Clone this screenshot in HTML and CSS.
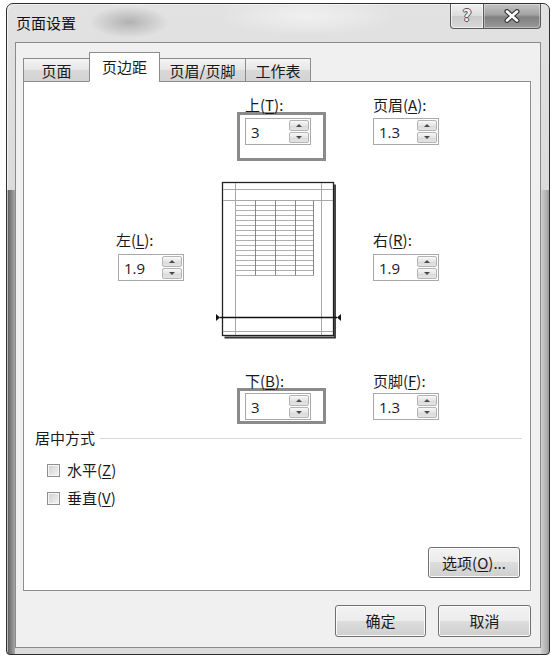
FILE: index.html
```html
<!DOCTYPE html>
<html lang="zh-CN">
<head>
<meta charset="utf-8">
<title>页面设置</title>
<link rel="stylesheet" href="styles.css">
</head>
<body>
<div class="window">
  <div class="titlebar">
    <span class="title">页面设置</span>
    <div class="caption">
      <span class="cbtn help">?</span>
      <span class="cbtn close">
        <svg width="18" height="14" viewBox="0 0 18 14"><path d="M4 2.5 L14 11.5 M14 2.5 L4 11.5" stroke="#3a3a3a" stroke-width="5" stroke-linecap="round"/><path d="M4 2.5 L14 11.5 M14 2.5 L4 11.5" stroke="#ffffff" stroke-width="2.6" stroke-linecap="round"/></svg>
      </span>
    </div>
  </div>
  <div class="client">
    <div class="tabs">
      <div class="tab t1">页面</div>
      <div class="tab t2 active">页边距</div>
      <div class="tab t3">页眉/页脚</div>
      <div class="tab t4">工作表</div>
    </div>
    <div class="panel">
      <div class="margins">
        <div class="f-top">
          <div class="lbl lbl-c">上(<u>T</u>):</div>
          <div class="hl hl-top">
            <div class="spin"><span class="val">3</span><span class="arrows"><i class="ab"><b class="up"></b></i><i class="ab"><b class="dn"></b></i></span></div>
          </div>
        </div>
        <div class="f-header">
          <div class="lbl">页眉(<u>A</u>):</div>
          <div class="spin sp-r1"><span class="val">1.3</span><span class="arrows"><i class="ab"><b class="up"></b></i><i class="ab"><b class="dn"></b></i></span></div>
        </div>
        <div class="f-left">
          <div class="lbl">左(<u>L</u>):</div>
          <div class="spin sp-r2 sp-left"><span class="val">1.9</span><span class="arrows"><i class="ab"><b class="up"></b></i><i class="ab"><b class="dn"></b></i></span></div>
        </div>
        <div class="preview">
          <svg width="126" height="160" viewBox="0 0 126 160">
            <rect x="6.5" y="1.5" width="111" height="153" fill="#fff" stroke="#222" stroke-width="1.3"/>
            <path d="M119 3.5 V156.5 H8.5" fill="none" stroke="#333" stroke-width="1.8"/>
            <g stroke="#a8a8a8" stroke-width="1">
              <path d="M19.5 2 V154 M105.5 2 V154 M7 8.5 H117 M7 19.5 H117 M7 150.5 H117"/>
            </g>
            <g stroke="#9a9a9a" stroke-width="0.8">
              <path d="M19.5 24.5 H97.5 M19.5 29.5 H97.5 M19.5 34.5 H97.5 M19.5 39.5 H97.5 M19.5 44.5 H97.5 M19.5 49.5 H97.5 M19.5 54.5 H97.5 M19.5 59.5 H97.5 M19.5 64.5 H97.5 M19.5 69.5 H97.5 M19.5 74.5 H97.5 M19.5 79.5 H97.5 M19.5 84.5 H97.5 M19.5 89.5 H97.5 M19.5 94.5 H97.5"/>
            </g>
            <g stroke="#7a7a7a" stroke-width="0.9">
              <path d="M39.5 19.5 V94.5 M59.5 19.5 V94.5 M79.5 19.5 V94.5 M97.5 19.5 V94.5"/>
            </g>
            <path d="M4 136.5 H121" stroke="#111" stroke-width="1.6"/>
            <polygon points="0,133 4,136.5 0,140" fill="#111"/>
            <polygon points="125,133 121,136.5 125,140" fill="#111"/>
          </svg>
        </div>
        <div class="f-right">
          <div class="lbl">右(<u>R</u>):</div>
          <div class="spin sp-r2"><span class="val">1.9</span><span class="arrows"><i class="ab"><b class="up"></b></i><i class="ab"><b class="dn"></b></i></span></div>
        </div>
        <div class="f-bottom">
          <div class="lbl lbl-c lbl-14">下(<u>B</u>):</div>
          <div class="hl hl-bottom">
            <div class="spin"><span class="val">3</span><span class="arrows"><i class="ab"><b class="up"></b></i><i class="ab"><b class="dn"></b></i></span></div>
          </div>
        </div>
        <div class="f-footer">
          <div class="lbl lbl-14">页脚(<u>F</u>):</div>
          <div class="spin sp-r3"><span class="val">1.3</span><span class="arrows"><i class="ab"><b class="up"></b></i><i class="ab"><b class="dn"></b></i></span></div>
        </div>
      </div>
      <div class="group-head"><span>居中方式</span><span class="rule"></span></div>
      <div class="chk chk1"><span class="box"></span><span>水平(<u>Z</u>)</span></div>
      <div class="chk chk2"><span class="box"></span><span>垂直(<u>V</u>)</span></div>
      <div class="btn opt">选项(<u>O</u>)...</div>
    </div>
    <div class="footer">
      <div class="btn ok">确定</div>
      <div class="btn cancel">取消</div>
    </div>
  </div>
</div>
</body>
</html>
```

FILE: styles.css
```css
html, body {
  margin: 0;
  padding: 0;
  background: #ffffff;
}
body {
  font-family: "Noto Sans CJK SC", "Noto Sans", sans-serif;
  font-size: 15px;
  color: #1a1a1a;
}
u { text-decoration: underline; text-underline-offset: 2px; }

.window {
  box-sizing: border-box;
  width: 544px;
  height: 652px;
  margin: 3px 0 0 6px;
  border: 1px solid #2e2e2e;
  border-radius: 7px 7px 4px 4px;
  padding: 0 8px 6px 8px;
  display: flex;
  flex-direction: column;
  background:
    linear-gradient(90deg, #555 0%, #7a7a7a 40%, #a6a6a6 100%) left 0 top 186px / 8px 100% no-repeat,
    linear-gradient(90deg, #cfcfcf 0%, #b4b4b4 60%, #9c9c9c 100%) right 0 top 186px / 8px 100% no-repeat,
    radial-gradient(ellipse 40px 16px at 122px 18px, rgba(120,120,120,0.45), rgba(120,120,120,0) 100%),
    radial-gradient(ellipse 90px 20px at 300px 12px, rgba(255,255,255,0.5), rgba(255,255,255,0) 100%),
    linear-gradient(#e2e2e2, #d3d3d3 60%, #dcdcdc);
  box-shadow: inset 1px 1px 0 rgba(255,255,255,0.6);
}

.titlebar {
  height: 38px;
  display: flex;
  align-items: center;
  justify-content: space-between;
  flex: none;
}
.title {
  padding-left: 1px;
  font-size: 15px;
  line-height: 18px;
  color: #111;
}
.caption {
  align-self: flex-start;
  display: flex;
  height: 25px;
}
.cbtn {
  box-sizing: border-box;
  height: 25px;
  border: 1px solid #5a5a5a;
  border-top: none;
  display: flex;
  align-items: center;
  justify-content: center;
}
.help {
  width: 34px;
  border-radius: 0 0 0 4px;
  background: linear-gradient(#f2f2f2, #dcdcdc 50%, #cbcbcb 51%, #d8d8d8);
  font-family: "DejaVu Sans", sans-serif;
  font-size: 15px;
  font-weight: bold;
  color: #f0f0f0;
  text-shadow: 1px 0 0 #555, -1px 0 0 #555, 0 1px 0 #555, 0 -1px 0 #555;
  box-shadow: inset 0 0 0 1px rgba(255,255,255,0.6);
}
.close {
  width: 57px;
  border-left: none;
  border-radius: 0 0 4px 0;
  background: linear-gradient(#c4c4c4, #a2a2a2 45%, #808080 55%, #9a9a9a);
  box-shadow: inset 0 0 0 1px rgba(255,255,255,0.35);
}
.close svg { display: block; }

.client {
  flex: 1;
  box-sizing: border-box;
  border: 1px solid #8a8a8a;
  background: #f0f0f0;
  padding: 9px 9px 10px 7px;
  display: flex;
  flex-direction: column;
}

.tabs {
  display: flex;
  align-items: flex-end;
  height: 30px;
  margin-bottom: -1px;
  position: relative;
  z-index: 1;
}
.tab {
  box-sizing: border-box;
  height: 24px;
  border: 1px solid #8c8c8c;
  background: linear-gradient(#f4f4f4, #e6e6e6 50%, #d9d9d9 51%, #d3d3d3);
  display: flex;
  align-items: center;
  justify-content: center;
  font-size: 15px;
  line-height: 18px;
  padding-top: 1px;
  color: #1a1a1a;
}
.t1 { width: 67px; }
.t2 { width: 71px; margin-left: -1px; }
.t3 { width: 87px; margin-left: -1px; }
.t4 { width: 66px; margin-left: -1px; }
.tab.active {
  height: 30px;
  background: #ffffff;
  border-bottom-color: #ffffff;
  padding-top: 0;
  padding-bottom: 5px;
  align-items: flex-end;
}

.panel {
  box-sizing: border-box;
  width: 508px;
  height: 510px;
  border: 1px solid #8e8e8e;
  background: #ffffff;
  padding-top: 15px;
  display: flex;
  flex-direction: column;
  flex: none;
}

.margins {
  display: grid;
  grid-template-columns: 100px 157px 1fr;
  grid-template-rows: 84px 193px 50px;
  padding-left: 92px;
}
.lbl {
  font-size: 15px;
  line-height: 15px;
  white-space: nowrap;
}
.lbl-14 { line-height: 14px; }
.lbl-c { padding-left: 8px; }

.f-top { grid-column: 2; grid-row: 1; margin-left: 21px; }
.f-header { grid-column: 3; grid-row: 1; }
.f-left { grid-column: 1; grid-row: 2; margin-top: 51px; }
.preview { grid-column: 2; grid-row: 2; }
.preview svg { display: block; }
.f-right { grid-column: 3; grid-row: 2; margin-top: 51px; }
.f-bottom { grid-column: 2; grid-row: 3; margin-left: 21px; }
.f-footer { grid-column: 3; grid-row: 3; }

.hl {
  box-sizing: border-box;
  width: 89px;
  border: 3px solid #8b8b8b;
  padding-left: 5px;
}
.hl-top { height: 49px; padding-top: 3px; }
.hl-bottom { height: 36px; padding-top: 2px; }

.sp-r1 { margin-top: 6px; }
.sp-r2 { margin-top: 7px; }
.sp-r3 { margin-top: 5px; }
.sp-left { margin-left: 2px; }

.spin {
  box-sizing: border-box;
  width: 66px;
  height: 27px;
  border: 1px solid #a9a9a9;
  background: #ffffff;
  display: flex;
  align-items: center;
  justify-content: space-between;
  padding-left: 5px;
}
.val {
  font-family: "Open Sans", "Noto Sans", sans-serif;
  font-size: 15px;
  line-height: 18px;
  color: #1a1a1a;
}
.arrows {
  display: flex;
  flex-direction: column;
  gap: 1px;
  margin-right: 1px;
}
.ab {
  box-sizing: border-box;
  width: 20px;
  height: 11px;
  border: 1px solid #b4b4b4;
  border-radius: 2px;
  background: linear-gradient(#f8f8f8, #e4e4e4 50%, #d8d8d8 51%, #e6e6e6);
  display: flex;
  align-items: center;
  justify-content: center;
}
.up, .dn {
  width: 0;
  height: 0;
  border-left: 3px solid transparent;
  border-right: 3px solid transparent;
}
.up { border-bottom: 3px solid #4a4a4a; }
.dn { border-top: 3px solid #4a4a4a; }

.group-head {
  margin-top: 6px;
  padding-left: 11px;
  margin-right: 8px;
  display: flex;
  align-items: center;
  line-height: 16px;
  height: 16px;
}
.rule {
  flex: 1;
  height: 1px;
  margin-left: 5px;
  background: #d8d8d8;
  box-shadow: 0 1px 0 #ffffff;
}

.chk {
  display: flex;
  align-items: center;
  gap: 7px;
  padding-left: 23px;
  line-height: 16px;
  height: 16px;
}
.chk1 { margin-top: 16px; }
.chk2 { margin-top: 12px; }
.box {
  box-sizing: border-box;
  width: 13px;
  height: 13px;
  border: 1px solid #8e8f8f;
  background: linear-gradient(135deg, #cfcfcf, #f4f4f4);
  box-shadow: inset 0 0 0 1px #f6f6f6;
}

.btn {
  box-sizing: border-box;
  border: 1px solid #707070;
  border-radius: 3px;
  background: linear-gradient(#f3f3f3, #ebebeb 49%, #dddddd 50%, #cfcfcf);
  box-shadow: inset 0 0 0 1px #fbfbfb;
  display: flex;
  align-items: center;
  justify-content: center;
  font-size: 15px;
  line-height: 18px;
  color: #1a1a1a;
}
.opt {
  margin-top: auto;
  align-self: flex-end;
  margin-right: 10px;
  margin-bottom: 12px;
  width: 92px;
  height: 31px;
}

.footer {
  display: flex;
  justify-content: flex-end;
  gap: 12px;
  margin-top: 14px;
  padding-right: 8px;
}
.ok { width: 91px; height: 32px; }
.cancel { width: 93px; height: 32px; margin-right: -8px; }
```
